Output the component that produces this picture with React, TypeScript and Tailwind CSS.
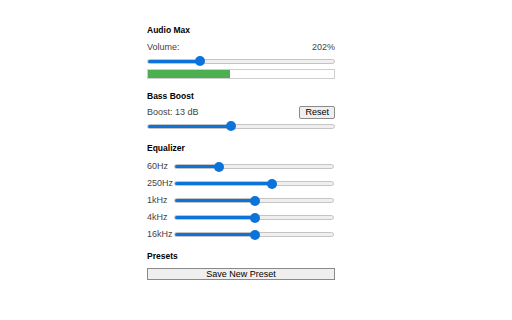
import React from 'react';

const Slider: React.FC<{ value: number; className?: string }> = ({ value, className = '' }) => (
  <div className={`relative h-[10px] flex items-center ${className}`}>
    <div className="w-full h-[5px] rounded-full bg-[#efefef] border border-[#c4c4c4] overflow-hidden">
      <div className="h-full bg-[#0b73d9]" style={{ width: `${value}%` }} />
    </div>
    <div
      className="absolute top-0 w-[10px] h-[10px] rounded-full bg-[#0b73d9] -translate-x-1/2"
      style={{ left: `${value}%` }}
    />
  </div>
);

const bands = [
  { label: '60Hz', value: 28 },
  { label: '250Hz', value: 61 },
  { label: '1kHz', value: 50.5 },
  { label: '4kHz', value: 50.5 },
  { label: '16kHz', value: 50.5 },
];

export default function App() {
  return (
    <div className="w-[512px] h-[320px] bg-white font-['Liberation_Sans',Arial,sans-serif] text-[9px] text-[#444]">
      <div className="ml-[147px] w-[188px] pt-[25px]">
        <h2 className="font-bold text-[8.5px] text-black leading-[10px]">Audio Max</h2>
        <div className="flex justify-between mt-[7px] leading-[11px]">
          <span>Volume:</span>
          <span>202%</span>
        </div>
        <Slider value={28} className="mt-[3px]" />
        <div className="mt-[3px] h-[10px] border border-[#cfcfcf] bg-white">
          <div className="h-full w-[44%] bg-[#4caf50]" />
        </div>

        <h2 className="font-bold text-[8.5px] text-black leading-[10px] mt-[12px]">Bass Boost</h2>
        <div className="flex justify-between items-end mt-[5px]">
          <span className="leading-[11px] pb-[1px]">Boost: 13 dB</span>
          <button className="h-[13px] px-[5px] border border-[#8a8a8a] rounded-[2px] bg-[#efefef] text-[9px] leading-[11px] text-black">
            Reset
          </button>
        </div>
        <Slider value={44.5} className="mt-[2px]" />

        <h2 className="font-bold text-[8.5px] text-black leading-[10px] mt-[12px]">Equalizer</h2>
        <div className="mt-[8px] flex flex-col gap-[6px]">
          {bands.map(b => (
            <div key={b.label} className="flex items-center h-[11px]">
              <span className="w-[27px] leading-[11px]">{b.label}</span>
              <Slider value={b.value} className="flex-1 mr-[1px]" />
            </div>
          ))}
        </div>

        <h2 className="font-bold text-[8.5px] text-black leading-[10px] mt-[11px]">Presets</h2>
        <button className="mt-[7px] w-full h-[12px] border border-[#8a8a8a] bg-[#efefef] text-[9px] leading-[10px] text-black">
          Save New Preset
        </button>
      </div>
    </div>
  );
}
